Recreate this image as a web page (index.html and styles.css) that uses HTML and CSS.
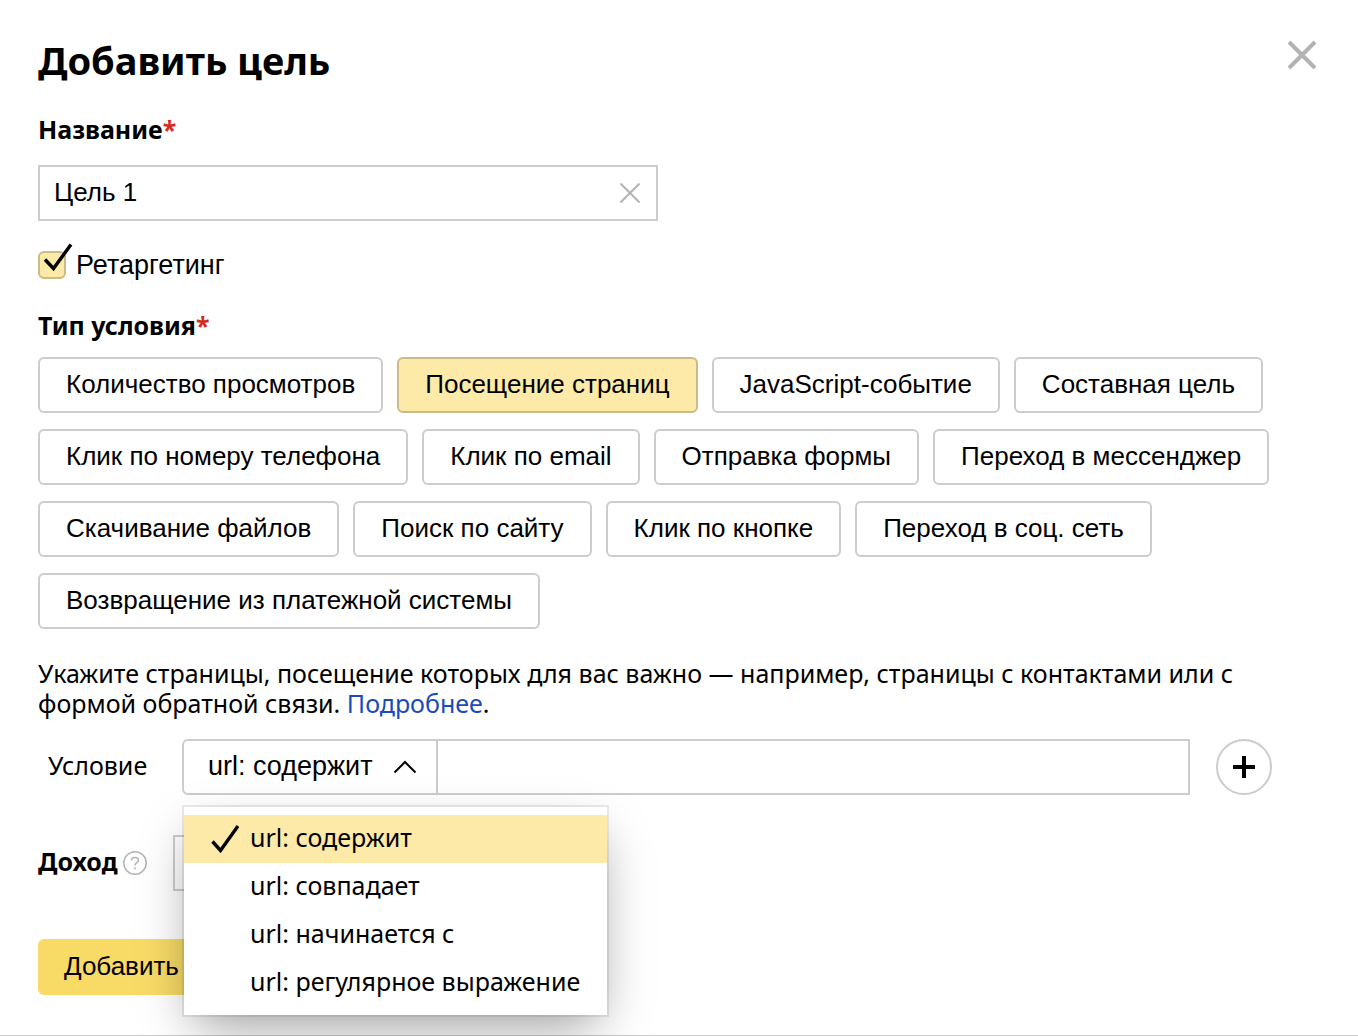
FILE: index.html
```html
<!DOCTYPE html>
<html lang="ru">
<head>
<meta charset="utf-8">
<title>Добавить цель</title>
<link rel="stylesheet" href="styles.css">
</head>
<body>
<form class="goal">
  <header class="goal-header">
    <h1 class="title">Добавить цель</h1>
    <button class="icon-button close" type="button" aria-label="Закрыть">
      <svg width="30" height="30" viewBox="0 0 30 30"><path d="M2 2 28 28M28 2 2 28" stroke="#b3b3b3" stroke-width="4"/></svg>
    </button>
  </header>

  <label class="label" for="name">Название<span class="required">*</span></label>
  <div class="name-field">
    <input class="name-input" id="name" type="text" value="Цель 1">
    <button class="icon-button" type="button" aria-label="Очистить">
      <svg width="20" height="20" viewBox="0 0 20 20"><path d="M0.5 0.5 19.5 19.5M19.5 0.5 0.5 19.5" stroke="#b3b3b3" stroke-width="2"/></svg>
    </button>
  </div>

  <label class="checkbox">
    <span class="checkbox-box">
      <input class="checkbox-input" type="checkbox" checked>
      <svg class="checkbox-tick" width="30" height="30" viewBox="0 0 30 30"><path d="M2 16.500 10.500 25.500 28 1.500" fill="none" stroke="#000" stroke-width="3.400"/></svg>
    </span>
    Ретаргетинг
  </label>

  <h2 class="label" id="type">Тип условия<span class="required">*</span></h2>
  <div class="types" role="group" aria-labelledby="type">
    <button class="type" type="button">Количество просмотров</button>
    <button class="type type-active" type="button" aria-pressed="true">Посещение страниц</button>
    <button class="type" type="button">JavaScript-событие</button>
    <button class="type" type="button">Составная цель</button>
    <button class="type" type="button">Клик по номеру телефона</button>
    <button class="type" type="button">Клик по email</button>
    <button class="type" type="button">Отправка формы</button>
    <button class="type" type="button">Переход в мессенджер</button>
    <button class="type" type="button">Скачивание файлов</button>
    <button class="type" type="button">Поиск по сайту</button>
    <button class="type" type="button">Клик по кнопке</button>
    <button class="type" type="button">Переход в соц. сеть</button>
    <button class="type" type="button">Возвращение из платежной системы</button>
  </div>

  <p class="hint">Укажите страницы, посещение которых для вас важно — например, страницы с контактами или с формой обратной связи. <a class="link" href="#">Подробнее</a>.</p>

  <div class="condition">
    <label class="condition-label" for="match">Условие</label>
    <div class="match">
      <select class="match-select" id="match">
        <option>url: содержит</option>
        <option>url: совпадает</option>
        <option>url: начинается с</option>
        <option>url: регулярное выражение</option>
      </select>
      <svg class="match-arrow" width="24" height="14" viewBox="0 0 24 14"><path d="M1.500 12.500 12 2 22.500 12.500" fill="none" stroke="#000" stroke-width="2"/></svg>
      <ul class="menu" role="listbox" aria-label="Условие">
        <li class="menu-item menu-item-active" role="option" aria-selected="true">
          <svg width="28" height="28" viewBox="0 0 28 28"><path d="M1.500 16.500 9.500 25.500 27 1" fill="none" stroke="#000" stroke-width="3.400"/></svg>
          <span class="menu-text">url: содержит</span>
        </li>
        <li class="menu-item" role="option"><span class="menu-text">url: совпадает</span></li>
        <li class="menu-item" role="option"><span class="menu-text">url: начинается с</span></li>
        <li class="menu-item" role="option"><span class="menu-text">url: регулярное выражение</span></li>
      </ul>
    </div>
    <input class="condition-value" type="text" aria-label="Значение условия">
    <button class="add" type="button" aria-label="Добавить условие">
      <svg width="24" height="24" viewBox="0 0 24 24"><path d="M12 1V23M1 12H23" stroke="#000" stroke-width="4"/></svg>
    </button>
  </div>

  <div class="income">
    <label class="label" for="income">Доход</label>
    <button class="icon-button help" type="button" aria-label="Справка">
      <svg width="24" height="24" viewBox="0 0 24 24" fill="none" stroke="#b3b3b3"><circle cx="12" cy="12" r="11.200" stroke-width="1.500"/><path d="M8.500 9.500C8.500 5.500 15.500 5.500 15.500 9.500C15.500 12 12 11.500 12 14.500M12 16.300V18.300" stroke-width="1.500"/></svg>
    </button>
    <input class="income-input" id="income" type="text">
  </div>

  <button class="submit" type="submit">Добавить</button>
</form>
</body>
</html>
```
FILE: styles.css
```css
* {
  box-sizing: border-box;
}

body {
  margin: 0;
  background: #fff;
  color: #000;
  font: 25px/30px "Noto Sans", sans-serif;
}

button,
input,
select {
  margin: 0;
  color: inherit;
  font: 26px/30px "Liberation Sans", Arial, sans-serif;
}

button {
  cursor: pointer;
}

svg {
  display: block;
}

.goal {
  padding: 36px 38px 40px;
  border-bottom: 1px solid #ccc;
}

.goal-header {
  display: flex;
  justify-content: space-between;
  align-items: flex-start;
  margin-bottom: 30px;
}

.title {
  margin: 0;
  font-size: 38px;
  line-height: 48px;
}

.icon-button {
  flex: none;
  padding: 2px;
  border: 0;
  background: none;
}

.close {
  padding: 4px 3px;
}

.label {
  display: block;
  margin: 0;
  font-size: 25px;
  font-weight: 700;
  line-height: 30px;
}

.required {
  color: #d52b1e;
}

.name-field {
  display: flex;
  align-items: center;
  width: 620px;
  max-width: 100%;
  height: 56px;
  margin: 21px 0 29px;
  padding-right: 14px;
  border: 2px solid #ccc;
}

.name-input {
  flex: 1;
  min-width: 0;
  padding: 0 14px 2px;
  border: 0;
  outline: 0;
  background: none;
}

.checkbox {
  display: flex;
  align-items: center;
  gap: 10px;
  margin-bottom: 30px;
  font: 27px/30px "Liberation Sans", Arial, sans-serif;
}

.checkbox-box {
  position: relative;
}

.checkbox-input {
  display: block;
  width: 28px;
  height: 28px;
  border: 2px solid #cabb88;
  border-radius: 6px;
  background: #fdeaa8;
  appearance: none;
}

.checkbox-tick {
  position: absolute;
  top: -8px;
  left: 5px;
}

.types {
  display: flex;
  flex-wrap: wrap;
  gap: 16px 14px;
  margin: 17px 0 29px;
}

.type {
  height: 56px;
  padding: 0 26px 2px;
  border: 2px solid #ccc;
  border-radius: 6px;
  background: #fff;
}

.type-active {
  border-color: #cabb88;
  background: #fdeaa8;
}

.hint {
  margin: 0 0 21px;
}

.link {
  color: #1a4bbd;
  text-decoration: none;
}

.condition {
  display: flex;
  align-items: center;
  margin: 0 48px 40px 10px;
}

.condition-label {
  width: 134px;
  padding-bottom: 4px;
}

.match {
  position: relative;
  width: 256px;
}

.match-select {
  display: block;
  width: 100%;
  height: 56px;
  padding: 0 24px 2px;
  border: 2px solid #ccc;
  border-radius: 6px 0 0 6px;
  background: #fff;
  font-size: 27px;
  appearance: none;
}

.match-arrow {
  position: absolute;
  top: 21px;
  right: 21px;
  pointer-events: none;
}

.menu {
  position: absolute;
  z-index: 1;
  top: 68px;
  left: 2px;
  width: 423px;
  margin: 0;
  padding: 8px 0;
  background: #fff;
  box-shadow: 0 0 0 2px rgba(0, 0, 0, 0.08), 0 20px 50px -10px rgba(0, 0, 0, 0.4);
  list-style: none;
}

.menu-item {
  display: flex;
  align-items: center;
  height: 48px;
  padding-left: 66px;
  white-space: nowrap;
}

.menu-item-active {
  gap: 11px;
  padding-left: 27px;
  background: #fdeaa8;
}

.menu-text {
  padding-bottom: 4px;
}

.condition-value {
  flex: 1;
  min-width: 0;
  height: 56px;
  padding: 0 14px;
  border: 2px solid #ccc;
  border-left: 0;
  border-radius: 0;
  background: #fff;
}

.add {
  display: flex;
  flex: none;
  align-items: center;
  justify-content: center;
  width: 56px;
  height: 56px;
  margin-left: 26px;
  padding: 0;
  border: 2px solid #ccc;
  border-radius: 50%;
  background: #fff;
}

.income {
  display: flex;
  align-items: center;
  margin-bottom: 48px;
}

.income .label {
  padding-bottom: 4px;
}

.help {
  margin: 0 24px 0 3px;
}

.income-input {
  width: 300px;
  height: 56px;
  padding: 0 14px;
  border: 2px solid #ccc;
  border-radius: 0;
}

.submit {
  display: block;
  height: 56px;
  padding: 0 26px 2px;
  border: 0;
  border-radius: 6px;
  background: #f8db67;
}
```
